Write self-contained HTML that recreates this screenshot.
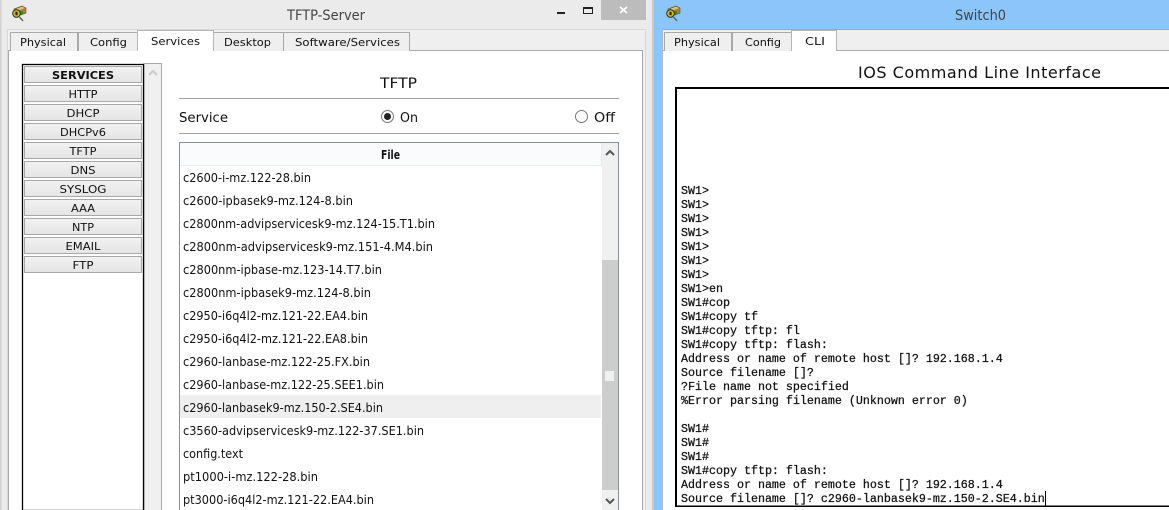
<!DOCTYPE html>
<html><head><meta charset="utf-8"><style>
html,body{margin:0;padding:0;background:#fff;overflow:hidden;width:1169px;height:510px}
svg{display:block}
text{font-family:"DejaVu Sans","Liberation Sans",sans-serif;font-size:11px;fill:#111}
.m text{font-family:"Liberation Mono",monospace;font-size:11.67px;fill:#111;stroke:#111;stroke-width:.25}
.b text{text-anchor:middle;font-size:10.5px}
.f text{font-size:12px}
</style></head><body>
<svg width="1169" height="510" viewBox="0 0 1169 510" xmlns="http://www.w3.org/2000/svg">
<defs>
<linearGradient id="g" x1="0" y1="0" x2="0" y2="1"><stop offset="0" stop-color="#f2f2f2"/><stop offset="1" stop-color="#e4e4e4"/></linearGradient>
<g id="ic">
<polygon points="4,4 12,1 16,3 16,8 8,11 4,9" fill="#a9803c" stroke="#5f4a20" stroke-width=".6"/>
<polygon points="6,4 12,1.6 15,3 9,5.4" fill="#dcc084"/>
<rect x="9" y="6" width="4" height="3.5" fill="#2f8a30"/>
<circle cx="6.5" cy="8.5" r="3.8" fill="#d8b828" stroke="#30402a" stroke-width="1.1"/>
<rect x="5.4" y="6.8" width="2.2" height="3.4" fill="#2a2a12"/>
<line x1="9.5" y1="12" x2="13" y2="16" stroke="#666" stroke-width="1.5"/>
</g>
</defs>
<!-- left window -->
<rect width="654" height="510" fill="#ebebeb"/>
<rect x="0" y="0" width="1.5" height="510" fill="#d2d2d2"/>
<rect x="652" y="0" width="2" height="510" fill="#c9c9c9"/>
<rect x="7.5" y="29.5" width="638" height="481" fill="#efefef" stroke="#d9d9d9"/>
<rect x="8.5" y="50.5" width="634" height="460" fill="#fff" stroke="#a9a9a9"/>
<use href="#ic" x="10" y="5"/>
<text x="287" y="20" textLength="78" lengthAdjust="spacingAndGlyphs" style="font-size:14px;fill:#444">TFTP-Server</text>
<rect x="557" y="12" width="8" height="2" fill="#222"/>
<rect x="583.5" y="7.5" width="9" height="6" fill="none" stroke="#222"/><rect x="583" y="7" width="10" height="2" fill="#222"/>
<rect x="601" y="0" width="45" height="20" fill="#bcbcbc"/>
<path d="M620 7l7 6m0-6l-7 6" stroke="#fff" stroke-width="1.6" fill="none"/>
<!-- tabs -->
<g fill="#efefef" stroke="#a9a9a9">
<path d="M10.5 51V32.5H77.5V51"/>
<path d="M78.5 51V32.5H137.5V51"/>
<path d="M213.5 51V32.5H283.5V51"/>
<path d="M283.5 51V32.5H409.5V51"/>
</g>
<path d="M137.5 51V30.5H213.5V51" fill="#fff" stroke="#b5b5b5"/>
<rect x="138" y="49" width="75" height="3" fill="#fff"/>
<text x="20" y="46" textLength="46" lengthAdjust="spacingAndGlyphs">Physical</text>
<text x="90" y="46" textLength="37" lengthAdjust="spacingAndGlyphs">Config</text>
<text x="151" y="45" textLength="49" lengthAdjust="spacingAndGlyphs">Services</text>
<text x="224" y="46" textLength="47" lengthAdjust="spacingAndGlyphs">Desktop</text>
<text x="295" y="46" textLength="105" lengthAdjust="spacingAndGlyphs">Software/Services</text>
<!-- services list -->
<rect x="144" y="63.5" width="17.5" height="447" fill="#f0f0f0" stroke="#a9a9a9"/>
<rect x="22.5" y="64.5" width="121" height="446" fill="#fff" stroke="#000" stroke-width="1.3"/>
<path d="M149 75l4-4 4 4" fill="none" stroke="#ccc" stroke-width="2"/>
<g fill="url(#g)" stroke="#a8a8a8">
<rect x="24.5" y="66.5" width="117" height="16"/><rect x="24.5" y="85.5" width="117" height="16"/>
<rect x="24.5" y="104.5" width="117" height="16"/><rect x="24.5" y="123.5" width="117" height="16"/>
<rect x="24.5" y="142.5" width="117" height="16"/><rect x="24.5" y="161.5" width="117" height="16"/>
<rect x="24.5" y="180.5" width="117" height="16"/><rect x="24.5" y="199.5" width="117" height="16"/>
<rect x="24.5" y="218.5" width="117" height="16"/><rect x="24.5" y="237.5" width="117" height="16"/>
<rect x="24.5" y="256.5" width="117" height="16"/>
</g>
<g class="b">
<text x="83" y="79" style="font-weight:bold" textLength="62" lengthAdjust="spacingAndGlyphs">SERVICES</text>
<text x="83" y="98" textLength="29" lengthAdjust="spacingAndGlyphs">HTTP</text>
<text x="83" y="117" textLength="33" lengthAdjust="spacingAndGlyphs">DHCP</text>
<text x="83" y="136" textLength="46" lengthAdjust="spacingAndGlyphs">DHCPv6</text>
<text x="83" y="155" textLength="27" lengthAdjust="spacingAndGlyphs">TFTP</text>
<text x="83" y="174" textLength="25" lengthAdjust="spacingAndGlyphs">DNS</text>
<text x="83" y="193" textLength="47" lengthAdjust="spacingAndGlyphs">SYSLOG</text>
<text x="83" y="212" textLength="24" lengthAdjust="spacingAndGlyphs">AAA</text>
<text x="83" y="231" textLength="22" lengthAdjust="spacingAndGlyphs">NTP</text>
<text x="83" y="250" textLength="35" lengthAdjust="spacingAndGlyphs">EMAIL</text>
<text x="83" y="269" textLength="21" lengthAdjust="spacingAndGlyphs">FTP</text>
</g>
<!-- TFTP panel -->
<text x="380" y="88" textLength="37" lengthAdjust="spacingAndGlyphs" style="font-size:14px">TFTP</text>
<rect x="179" y="98" width="440" height="1" fill="#a0a0a0"/>
<rect x="179" y="133" width="440" height="1" fill="#a0a0a0"/>
<text x="179" y="122" textLength="49" lengthAdjust="spacingAndGlyphs" style="font-size:13px">Service</text>
<circle cx="387.5" cy="116.5" r="6" fill="#fff" stroke="#777"/><circle cx="387.5" cy="116.5" r="3.5" fill="#222"/>
<text x="400" y="122" textLength="18" lengthAdjust="spacingAndGlyphs" style="font-size:13px">On</text>
<circle cx="581.5" cy="116.5" r="6" fill="#fff" stroke="#777"/>
<text x="594" y="122" textLength="21" lengthAdjust="spacingAndGlyphs" style="font-size:13px">Off</text>
<!-- table -->
<rect x="179.5" y="142.5" width="439" height="368" fill="#fff" stroke="#8a9097"/>
<rect x="180" y="143" width="422" height="22" fill="#fafbfc"/>
<rect x="180" y="165" width="422" height="1" fill="#e3ecf5"/>
<rect x="601" y="143" width="1" height="23" fill="#e3ecf5"/>
<text x="381" y="159" textLength="19" lengthAdjust="spacingAndGlyphs" style="font-weight:bold;font-size:12px">File</text>
<rect x="602" y="143" width="16" height="367" fill="#f0f0f0"/>
<rect x="602" y="260" width="16" height="230" fill="#cdcdcd"/>
<rect x="605" y="371" width="9" height="10" fill="#f0f0f0"/>
<rect x="602" y="493" width="16" height="17" fill="#f0f0f0"/>
<path d="M606 155l4-4 4 4" fill="none" stroke="#555" stroke-width="2"/>
<path d="M606 499l4 4 4-4" fill="none" stroke="#555" stroke-width="2"/>
<rect x="180" y="395" width="421" height="23" fill="#efefef"/>
<g class="f">
<text x="183" y="182" textLength="128" lengthAdjust="spacingAndGlyphs">c2600-i-mz.122-28.bin</text>
<text x="183" y="205" textLength="170" lengthAdjust="spacingAndGlyphs">c2600-ipbasek9-mz.124-8.bin</text>
<text x="183" y="228" textLength="252" lengthAdjust="spacingAndGlyphs">c2800nm-advipservicesk9-mz.124-15.T1.bin</text>
<text x="183" y="251" textLength="250" lengthAdjust="spacingAndGlyphs">c2800nm-advipservicesk9-mz.151-4.M4.bin</text>
<text x="183" y="274" textLength="199" lengthAdjust="spacingAndGlyphs">c2800nm-ipbase-mz.123-14.T7.bin</text>
<text x="183" y="297" textLength="188" lengthAdjust="spacingAndGlyphs">c2800nm-ipbasek9-mz.124-8.bin</text>
<text x="183" y="320" textLength="185" lengthAdjust="spacingAndGlyphs">c2950-i6q4l2-mz.121-22.EA4.bin</text>
<text x="183" y="343" textLength="185" lengthAdjust="spacingAndGlyphs">c2950-i6q4l2-mz.121-22.EA8.bin</text>
<text x="183" y="366" textLength="187" lengthAdjust="spacingAndGlyphs">c2960-lanbase-mz.122-25.FX.bin</text>
<text x="183" y="389" textLength="201" lengthAdjust="spacingAndGlyphs">c2960-lanbase-mz.122-25.SEE1.bin</text>
<text x="183" y="412" textLength="200" lengthAdjust="spacingAndGlyphs">c2960-lanbasek9-mz.150-2.SE4.bin</text>
<text x="183" y="435" textLength="241" lengthAdjust="spacingAndGlyphs">c3560-advipservicesk9-mz.122-37.SE1.bin</text>
<text x="183" y="458" textLength="60" lengthAdjust="spacingAndGlyphs">config.text</text>
<text x="183" y="481" textLength="135" lengthAdjust="spacingAndGlyphs">pt1000-i-mz.122-28.bin</text>
<text x="183" y="504" textLength="191" lengthAdjust="spacingAndGlyphs">pt3000-i6q4l2-mz.121-22.EA4.bin</text>
</g>
<!-- right window -->
<rect x="654" y="0" width="515" height="510" fill="#8bc5fa"/>
<rect x="662" y="29" width="507" height="481" fill="#efefef"/>
<rect x="662" y="29" width="507" height="1" fill="#7db0df"/>
<rect x="662" y="29" width="1" height="481" fill="#a6bdd2"/>
<rect x="663" y="51" width="506" height="459" fill="#fff"/>
<rect x="663" y="50" width="506" height="1" fill="#a9a9a9"/>
<use href="#ic" x="664" y="5"/>
<text x="955" y="20" textLength="51" lengthAdjust="spacingAndGlyphs" style="font-size:14px;fill:#444">Switch0</text>
<g fill="#efefef" stroke="#a9a9a9">
<path d="M664.5 51V32.5H731.5V51"/>
<path d="M732.5 51V32.5H791.5V51"/>
</g>
<path d="M791.5 51V30.5H836.5V51" fill="#fff" stroke="#b5b5b5"/>
<rect x="792" y="49" width="44" height="3" fill="#fff"/>
<text x="674" y="46" textLength="46" lengthAdjust="spacingAndGlyphs">Physical</text>
<text x="745" y="46" textLength="36" lengthAdjust="spacingAndGlyphs">Config</text>
<text x="805" y="45" textLength="20" lengthAdjust="spacingAndGlyphs">CLI</text>
<text x="858" y="78" textLength="243" lengthAdjust="spacing" style="font-size:16px">IOS Command Line Interface</text>
<rect x="675" y="87" width="494" height="2" fill="#000"/>
<rect x="675" y="87" width="2" height="420" fill="#000"/>
<rect x="675" y="505.5" width="494" height="1.5" fill="#000"/>
<g class="m">
<text x="681" y="194">SW1&gt;</text>
<text x="681" y="208">SW1&gt;</text>
<text x="681" y="222">SW1&gt;</text>
<text x="681" y="236">SW1&gt;</text>
<text x="681" y="250">SW1&gt;</text>
<text x="681" y="264">SW1&gt;</text>
<text x="681" y="278">SW1&gt;</text>
<text x="681" y="292">SW1&gt;en</text>
<text x="681" y="306">SW1#cop</text>
<text x="681" y="320">SW1#copy tf</text>
<text x="681" y="334">SW1#copy tftp: fl</text>
<text x="681" y="348">SW1#copy tftp: flash:</text>
<text x="681" y="362">Address or name of remote host []? 192.168.1.4</text>
<text x="681" y="376">Source filename []?</text>
<text x="681" y="390">?File name not specified</text>
<text x="681" y="404">%Error parsing filename (Unknown error 0)</text>
<text x="681" y="432">SW1#</text>
<text x="681" y="446">SW1#</text>
<text x="681" y="460">SW1#</text>
<text x="681" y="474">SW1#copy tftp: flash:</text>
<text x="681" y="488">Address or name of remote host []? 192.168.1.4</text>
<text x="681" y="502">Source filename []? c2960-lanbasek9-mz.150-2.SE4.bin</text>
</g>
<rect x="1045" y="491" width="1" height="15" fill="#000"/>
</svg>
</body></html>
